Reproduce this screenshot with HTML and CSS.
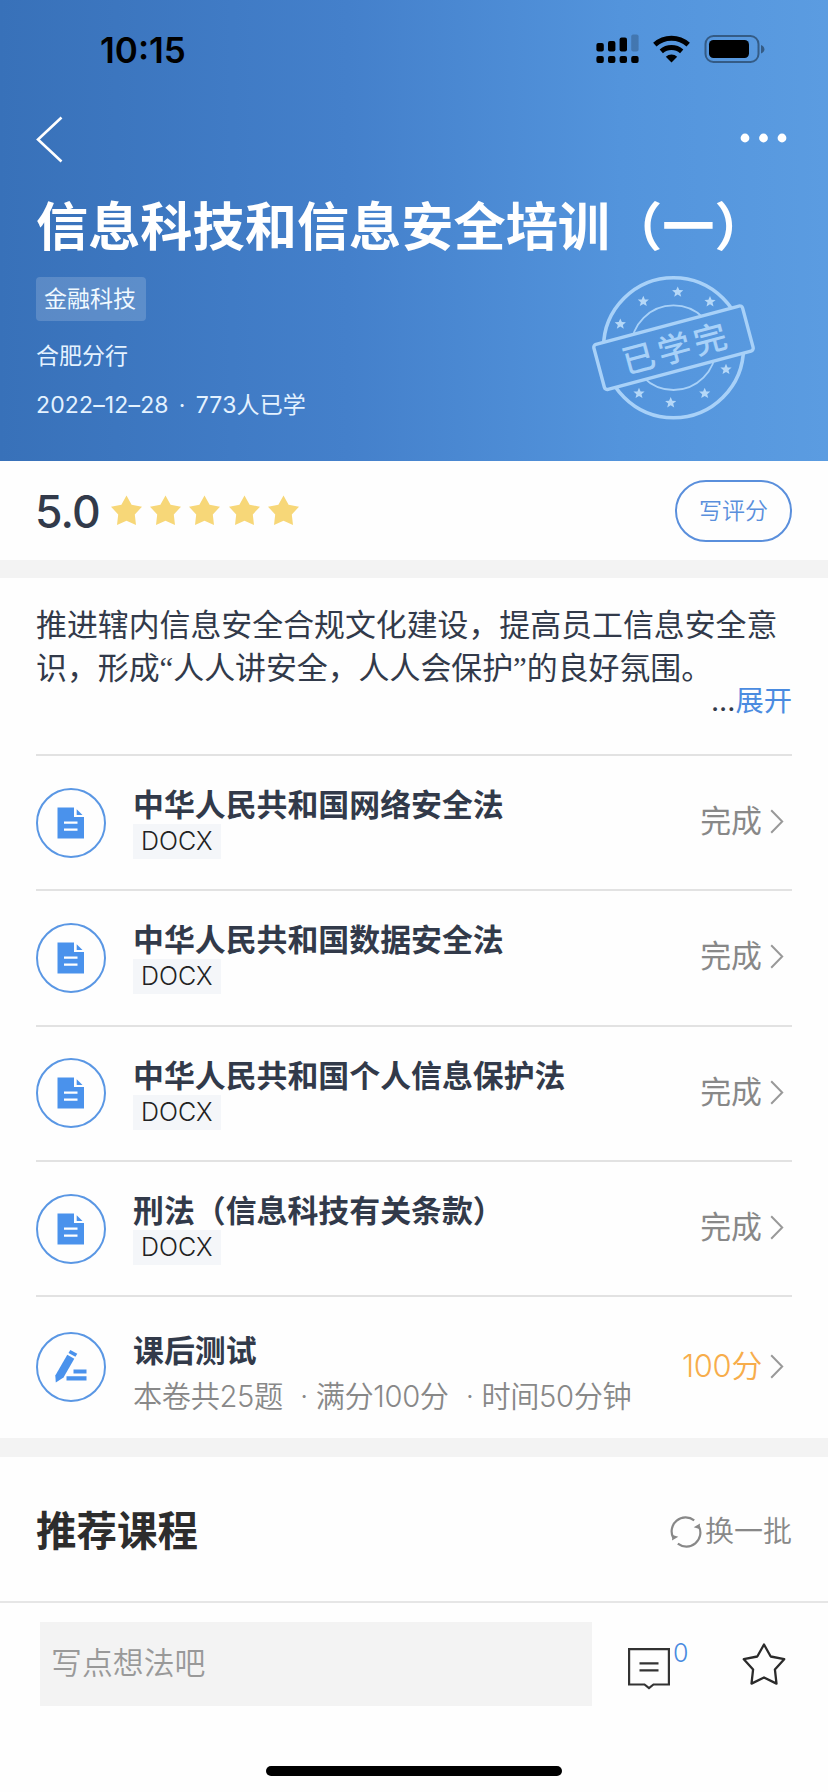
FILE: index.html
```html
<!DOCTYPE html>
<html lang="zh-CN">
<head>
<meta charset="utf-8">
<title>信息科技和信息安全培训（一）</title>
<link rel="stylesheet" href="styles.css">
</head>
<body>
<svg class="defs" width="0" height="0" aria-hidden="true">
  <symbol id="star" viewBox="0 0 31 31"><path d="M15.5 0.5 L20.6 9.7 L31 11.7 L23.8 19.4 L25 30 L15.5 25.8 L6 30 L7.2 19.4 L0 11.7 L10.4 9.7 Z"/></symbol>
  <symbol id="doc" viewBox="0 0 70 70"><circle cx="35" cy="35" r="34" fill="none" stroke="#5a97e4" stroke-width="2"/><path fill="#4a92ec" d="M21.5 19.5H38V29H48V50.5H21.5Z"/><path fill="#4a92ec" d="M40.7 21.3L46.5 27H40.7Z"/><path stroke="#fff" stroke-width="2.4" d="M28 34.6H41.5M28 41.6H41.5"/></symbol>
  <symbol id="chev" viewBox="0 0 14 25"><path d="M1.2 1.2L12.2 12.5L1.2 23.8" fill="none" stroke="#999" stroke-width="2"/></symbol>
  <symbol id="tiny" viewBox="-6 -6 12 12"><path d="M0-5.6L1.6-1.9L5.6-1.7L2.5.9L3.5 4.8L0 2.6L-3.5 4.8L-2.5.9L-5.6-1.7L-1.6-1.9Z"/></symbol>
</svg>
<div class="screen">
  <header class="hero">
    <div class="status">
      <span class="clock">10:15</span>
      <svg width="172" height="32" viewBox="0 0 172 32">
        <g>
          <rect x="2.4" y="10" width="7.4" height="8.6" rx="2"/><rect x="14" y="8" width="7.4" height="10.6" rx="2"/><rect x="25.6" y="4.5" width="7.4" height="14.1" rx="2"/><rect x="37.2" y="1.5" width="7.4" height="17.1" rx="2" opacity=".2"/>
          <rect x="2.4" y="23" width="7.4" height="7" rx="2"/><rect x="14" y="23" width="7.4" height="7" rx="2"/><rect x="25.6" y="23" width="7.4" height="7" rx="2"/><rect x="37.2" y="23" width="7.4" height="7" rx="2"/>
        </g>
        <g fill="none" stroke="#000" stroke-width="5"><path d="M60.8 11.6A25 25 0 0 1 94.2 11.6"/><path d="M67.3 18.3A15.6 15.6 0 0 1 87.7 18.3"/></g>
        <path d="M77.5 29.6L71.8 23.7A8.6 8.6 0 0 1 83.2 23.7Z"/>
        <rect x="111.5" y="3" width="53" height="26" rx="8" fill="none" stroke="#000" stroke-opacity=".4" stroke-width="2"/>
        <rect x="115" y="7" width="40" height="18" rx="4.5"/>
        <path d="M167 12v8.5c2-.6 3.4-2.2 3.4-4.2S169 12.600 167 12Z" opacity=".4"/>
      </svg>
    </div>
    <div class="nav">
      <svg width="28" height="47" viewBox="0 0 28 47"><path d="M25.500 1.500L2 23.500L25.500 45.500" fill="none" stroke="#fff" stroke-width="2.600"/></svg>
      <svg class="more" width="48" height="10" viewBox="0 0 48 10" fill="#fff"><circle cx="5" cy="5" r="4.400"/><circle cx="23.500" cy="5" r="4.400"/><circle cx="42" cy="5" r="4.400"/></svg>
    </div>
    <h1 class="title">信息科技和信息安全培训（一）</h1>
    <div class="meta">
      <div class="info">
        <span class="topic">金融科技</span>
        <span class="branch">合肥分行</span>
        <span class="date">2022–12–28 · 773人已学</span>
      </div>
      <svg class="stamp" width="170" height="156" viewBox="0 0 170 156">
        <mask id="band"><rect width="170" height="156" fill="#fff"/><rect x="6.500" y="54.400" width="154" height="46.600" fill="#000" transform="rotate(-15 83.500 77.700)"/></mask>
        <g fill="none" stroke="#a8d1f8" mask="url(#band)"><circle cx="83.500" cy="77.700" r="70" stroke-width="3.600"/><circle cx="83.500" cy="77.700" r="42.300" stroke-width="1.800"/></g>
        <g transform="rotate(-15 83.500 77.700)"><rect x="6.500" y="54.400" width="154" height="46.600" rx="3" fill="none" stroke="#a8d1f8" stroke-width="3.400"/><text class="stamp-text" x="30.500" y="91">已学完</text></g>
        <g fill="#b5d8f8">
          <use href="#tiny" x="24.300" y="48" width="12" height="12"/><use href="#tiny" x="47.300" y="25.300" width="12" height="12"/><use href="#tiny" x="81.700" y="16" width="12" height="12"/><use href="#tiny" x="114" y="25.700" width="12" height="12"/>
          <use href="#tiny" x="130" y="93.300" width="12" height="12"/><use href="#tiny" x="108.700" y="117.300" width="12" height="12"/><use href="#tiny" x="74.700" y="126.700" width="12" height="12"/><use href="#tiny" x="43" y="117.300" width="12" height="12"/>
        </g>
      </svg>
    </div>
  </header>

  <section class="rating">
    <span class="score">5.0</span>
    <div class="stars">
      <svg><use href="#star"/></svg><svg><use href="#star"/></svg><svg><use href="#star"/></svg><svg><use href="#star"/></svg><svg><use href="#star"/></svg>
    </div>
    <button class="rate">写评分</button>
  </section>

  <section class="intro">
    <p class="desc">推进辖内信息安全合规文化建设，提高员工信息安全意识，形成“人人讲安全，人人会保护”的良好氛围。</p>
    <div class="expand"><span class="dots">...</span>展开</div>
  </section>

  <ul class="list">
    <li class="row"><svg class="badge"><use href="#doc"/></svg><div class="body"><h2 class="name">中华人民共和国网络安全法</h2><span class="type">DOCX</span></div><span class="state">完成</span><svg class="chev"><use href="#chev"/></svg></li>
    <li class="row"><svg class="badge"><use href="#doc"/></svg><div class="body"><h2 class="name">中华人民共和国数据安全法</h2><span class="type">DOCX</span></div><span class="state">完成</span><svg class="chev"><use href="#chev"/></svg></li>
    <li class="row"><svg class="badge"><use href="#doc"/></svg><div class="body"><h2 class="name">中华人民共和国个人信息保护法</h2><span class="type">DOCX</span></div><span class="state">完成</span><svg class="chev"><use href="#chev"/></svg></li>
    <li class="row"><svg class="badge"><use href="#doc"/></svg><div class="body"><h2 class="name">刑法（信息科技有关条款）</h2><span class="type">DOCX</span></div><span class="state">完成</span><svg class="chev"><use href="#chev"/></svg></li>
    <li class="row quiz">
      <svg class="badge" viewBox="0 0 70 70"><circle cx="35" cy="35" r="34" fill="none" stroke="#5a97e4" stroke-width="2"/><g fill="#4a92ec"><path d="M34.300 18L41.300 21.700L39.400 24.800L32.500 20.900Z"/><path d="M31.300 22.700L38.300 26.700L27.500 45.500L19.800 50.500L19.300 43.500Z"/><path d="M37.500 37.500H50.500V41.500H37.500ZM30.500 44.300H50.500V48.500H30.500Z"/></g></svg>
      <div class="body"><h2 class="name">课后测试</h2><span class="detail"><span>本卷共25题</span><span>· 满分100分</span><span>· 时间50分钟</span></span></div>
      <span class="state points">100分</span><svg class="chev"><use href="#chev"/></svg>
    </li>
  </ul>

  <section class="recommend">
    <h2 class="heading">推荐课程</h2>
    <span class="refresh"><svg width="32" height="32" viewBox="0 0 32 32"><g fill="none" stroke="#888" stroke-width="2.200"><path d="M24.200 4.300A14 14 0 0 0 3.200 21.800"/><path d="M7.800 27.700A14 14 0 0 0 28.800 10.200"/></g><path fill="#888" d="M30 7.500L29.500 13L23.700 11.300ZM2 24.500L2.500 19L8.300 20.700Z"/></svg>换一批</span>
  </section>

  <footer class="bar">
    <div class="input">写点想法吧</div>
    <div class="comment">
      <svg width="42" height="42" viewBox="0 0 42 42" fill="none" stroke="#333" stroke-width="2.200"><path d="M1.100 1.100H40.900V36.500H25.500L21 40.200L16.500 36.500H1.100Z"/><path d="M11.500 15.300H30.500M11.500 22.300H30.500"/></svg>
      <span class="count">0</span>
    </div>
    <svg class="fav" width="44" height="44" viewBox="0 0 44 44"><path d="M22 2.500L28.700 14.500L42.200 17.200L32.900 27.400L34.500 41.600L22 35.500L9.500 41.600L11.100 27.400L1.800 17.200L15.300 14.500Z" fill="none" stroke="#2b2b2b" stroke-width="2.300" stroke-linejoin="round"/></svg>
  </footer>
  <div class="home"></div>
</div>
</body>
</html>
```
FILE: styles.css
```css
* { box-sizing: border-box; margin: 0; padding: 0; }
body { background: #fefefe; font-family: Inter, "Noto Sans CJK SC", sans-serif; color: #323a4a; }
.defs { display: block; }
.screen { width: 828px; height: 1792px; display: flex; flex-direction: column; overflow: hidden; }
svg { flex: none; display: block; }

.hero { height: 461px; padding: 33px 36px 0; color: #fff; background: linear-gradient(90deg, #3871b9 0%, #4480cb 42%, #5394dc 75%, #5b9ce1 100%); }
.status { height: 34px; display: flex; justify-content: space-between; padding: 0 26px 0 64px; color: #000; }
.clock { font-size: 35px; font-weight: 600; line-height: 35px; }
.nav { height: 98px; padding-top: 49px; display: flex; justify-content: space-between; }
.more { margin: 17px 4px 0 0; }
.title { margin-top: 30px; font-size: 52.200px; line-height: 64px; font-weight: 600; white-space: nowrap; }
.meta { display: flex; justify-content: space-between; padding: 11px 32px 0 0; }
.info { display: flex; flex-direction: column; align-items: flex-start; padding-top: 7px; font-size: 23px; color: #e4f2ff; }
.topic { height: 44px; line-height: 44px; padding: 0 10px 0 8px; border-radius: 4px; background: rgba(255,255,255,.17); color: #f0f9ff; }
.branch { margin-top: 19px; line-height: 32px; }
.date { margin-top: 17px; line-height: 32px; letter-spacing: .15px; word-spacing: 3.500px; }
.stamp-text { font-size: 33px; letter-spacing: 4px; font-weight: 500; fill: #a8d1f8; }

.rating { height: 99px; padding: 0 36px; display: flex; align-items: center; }
.score { width: 75px; margin-top: 2px; font-size: 44.500px; letter-spacing: -.8px; text-indent: -1px; font-weight: 500; line-height: 60px; }
.stars { display: flex; gap: 8.200px; flex: 1; fill: #f7d778; }
.stars svg { width: 31px; height: 31px; }
.rate { width: 117px; height: 62px; border: 2px solid #5a8fdc; border-radius: 31px; background: transparent; color: #5a8fdc; font: 350 23px/56px Inter, "Noto Sans CJK SC", sans-serif; }

.intro { height: 194px; border-top: 18px solid #f3f3f3; padding: 27px 36px 0; }
.desc { width: 756px; font-family: "Liberation Serif", "Noto Sans CJK SC", serif; font-size: 30.900px; line-height: 42.600px; height: 85px; }
.expand { font-size: 28.300px; line-height: 30px; margin-top: -4px; text-align: right; color: #4a8be0; }
.dots { color: #323a4a; }

.list { list-style: none; padding: 0 36px; height: 684px; }
.row { height: 135.300px; border-top: 2px solid #e2e2e2; display: flex; align-items: center; }
.badge { width: 70px; height: 70px; margin-right: 27px; }
.body { flex: 1; display: flex; flex-direction: column; align-items: flex-start; }
.name { font-size: 30.900px; line-height: 38px; font-weight: 600; white-space: nowrap; }
.type { height: 35px; line-height: 35px; padding: 0 8px; background: #f4f6f9; font-size: 25px; font-weight: 300; color: #222; }
.state { font-size: 30.900px; font-weight: 400; line-height: 36px; color: #888; margin: 0 8px 3px 0; }
.chev { width: 14px; height: 25px; margin: 0 8px 2px 0; }
.quiz { height: 142px; }
.quiz .name { margin-top: 13px; }
.detail { display: flex; gap: 17px; font-size: 29.200px; letter-spacing: -.35px; line-height: 38px; margin-top: 8px; color: #888; font-weight: 350; white-space: nowrap; }
.points { color: #f7ad4b; font-weight: 350; letter-spacing: -.3px; }

.recommend { height: 163px; border-top: 19px solid #f3f3f3; padding: 5px 36px 0; display: flex; align-items: center; justify-content: space-between; }
.heading { font-size: 40.500px; line-height: 56px; font-weight: 700; color: #2d2d2d; }
.refresh { display: flex; align-items: center; gap: 3px; font-size: 29px; line-height: 40px; font-weight: 350; color: #888; }

.bar { height: 165px; border-top: 2px solid #e6e6e6; padding: 19px 42px 0 40px; display: flex; align-items: flex-start; }
.input { width: 552px; height: 84px; line-height: 82px; padding-left: 11px; background: #f3f3f3; font-size: 30.900px; color: #999; font-weight: 350; }
.comment { margin: 26px 0 0 36px; display: flex; width: 114px; }
.count { font-size: 25px; line-height: 26px; margin: -8px 0 0 3px; font-weight: 300; color: #4a8be0; }
.fav { margin-top: 20px; }
.home { width: 296px; height: 10px; border-radius: 5px; background: #000; margin: 0 auto; }
```
